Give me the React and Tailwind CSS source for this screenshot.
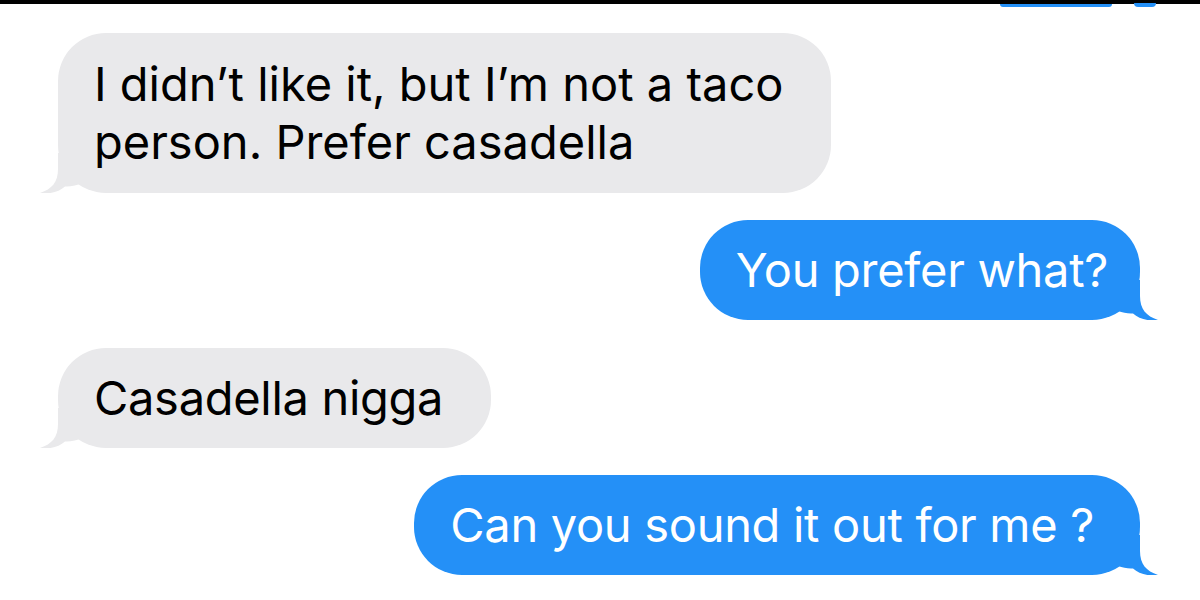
import React from "react";

function Tail({ side, color }) {
  const path =
    "M0 0 L22 0 L22 16 C22 29 28 36 40 40 C31 41.5 21 39 15 33.5 C10 34 5 32.5 0 31 Z";
  return (
    <svg
      width="40"
      height="40"
      viewBox="0 0 40 40"
      className={
        side === "right"
          ? "absolute bottom-0 right-[-18px]"
          : "absolute bottom-0 left-[-18px] -scale-x-100"
      }
    >
      <path d={path} fill={color} />
    </svg>
  );
}

function Left({ children, extra = "" }) {
  return (
    <div className="flex justify-start pl-[58px]">
      <div
        className={
          "relative rounded-[48px] bg-[#e9e9eb] text-black pl-[36px] pr-[48px] text-[47px] leading-[58px] " +
          extra
        }
      >
        <Tail side="left" color="#e9e9eb" />
        <span className="relative">{children}</span>
      </div>
    </div>
  );
}

function Right({ children, extra = "" }) {
  return (
    <div className="flex justify-end pr-[60px]">
      <div
        className={
          "relative rounded-[48px] bg-[#2490f7] text-white py-[21px] pl-[36px] text-[47px] leading-[58px] " +
          extra
        }
      >
        <Tail side="right" color="#2490f7" />
        <span className="relative">{children}</span>
      </div>
    </div>
  );
}

export default function App() {
  return (
    <div
      className="w-[1200px] h-[600px] bg-white overflow-hidden relative"
      style={{ fontFamily: "Inter, 'Noto Sans', sans-serif" }}
    >
      <div className="h-[4px] bg-black" />
      <div className="flex justify-end pr-[88px]">
        <div className="relative w-[112px] h-[3px] bg-[#2490f7] rounded-b-[3px]">
          <div className="absolute right-[-44px] top-[-1px] w-[22px] h-[4px] rounded-b-full bg-[#2490f7]" />
        </div>
      </div>
      <div className="flex flex-col pt-[26px]">
        <Left extra="py-[22px] tracking-[0px]">
          I didn’t like it, but I’m not a taco
          <br />
          person. Prefer casadella
        </Left>
        <div className="h-[27px]" />
        <Right extra="pr-[32px] tracking-[-0.3px]">You prefer what?</Right>
        <div className="h-[28px]" />
        <Left extra="py-[21px] tracking-[-0.3px]">Casadella nigga</Left>
        <div className="h-[27px]" />
        <Right extra="pr-[46px] tracking-[-0.3px]">Can you sound it out for me ?</Right>
      </div>
    </div>
  );
}
